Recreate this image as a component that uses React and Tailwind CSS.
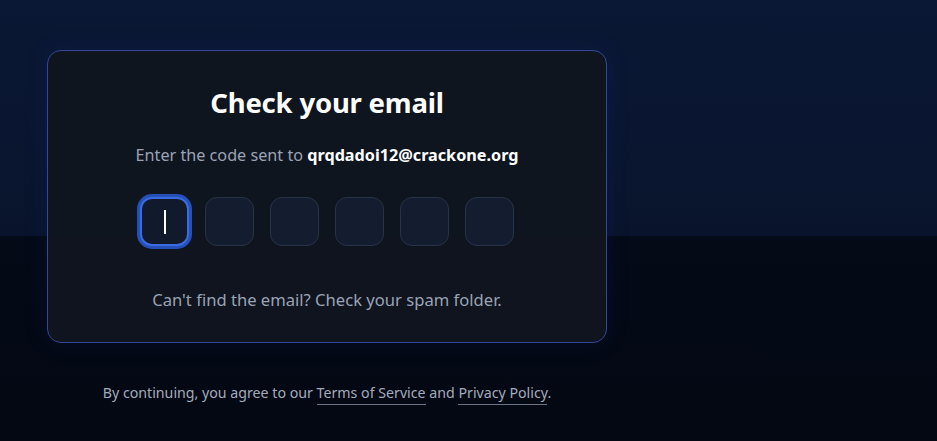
export default function App() {
  const digits = [0, 1, 2, 3, 4, 5];
  return (
    <div
      className="min-h-[441px] w-full bg-[linear-gradient(180deg,#0a1835_0px,#0a1631_120px,#09142c_236px,#040a16_236px,#030813_441px)] text-gray-400"
      style={{ fontFamily: '"Noto Sans", "Open Sans", sans-serif' }}
    >
      <div className="flex flex-col items-center w-[654px] pt-[50px]">
        <div className="w-[560px] h-[293px] rounded-[14px] border border-[#33489a] bg-[#10151f]/95 shadow-[0_0_24px_rgba(30,60,160,0.12)] flex flex-col items-center pt-[34px]">
          <h1 className="text-[27.5px] leading-[36px] font-bold text-white tracking-[-0.2px]">
            Check your email
          </h1>
          <p className="mt-[23px] text-[16.2px] leading-[22px] text-[#9aa3b5]">
            Enter the code sent to{" "}
            <span className="font-bold text-white">qrqdadoi12@crackone.org</span>
          </p>
          <div className="mt-[31px] flex gap-[16px]">
            {digits.map((i) =>
              i === 0 ? (
                <div
                  key={i}
                  className="w-[49px] h-[49px] rounded-[12px] border-2 border-[#3a6be0] ring-[3px] ring-[#2450b8] bg-[#111a2d] flex items-center justify-center"
                >
                  <span className="block w-[2px] h-[24px] bg-white" />
                </div>
              ) : (
                <div
                  key={i}
                  className="w-[49px] h-[49px] rounded-[12px] border border-[#283349] bg-[#141d2f]"
                />
              )
            )}
          </div>
          <p className="mt-[43px] text-[16.6px] leading-[22px] text-[#9aa3b5]">
            Can't find the email? Check your spam folder.
          </p>
        </div>
        <p className="mt-[40px] text-[14.2px] leading-[20px] text-[#a3abbb]">
          By continuing, you agree to our{" "}
          <span className="border-b border-[#6b7385] pb-[2px]">Terms of Service</span> and{" "}
          <span className="border-b border-[#6b7385] pb-[2px]">Privacy Policy</span>.
        </p>
      </div>
    </div>
  );
}
